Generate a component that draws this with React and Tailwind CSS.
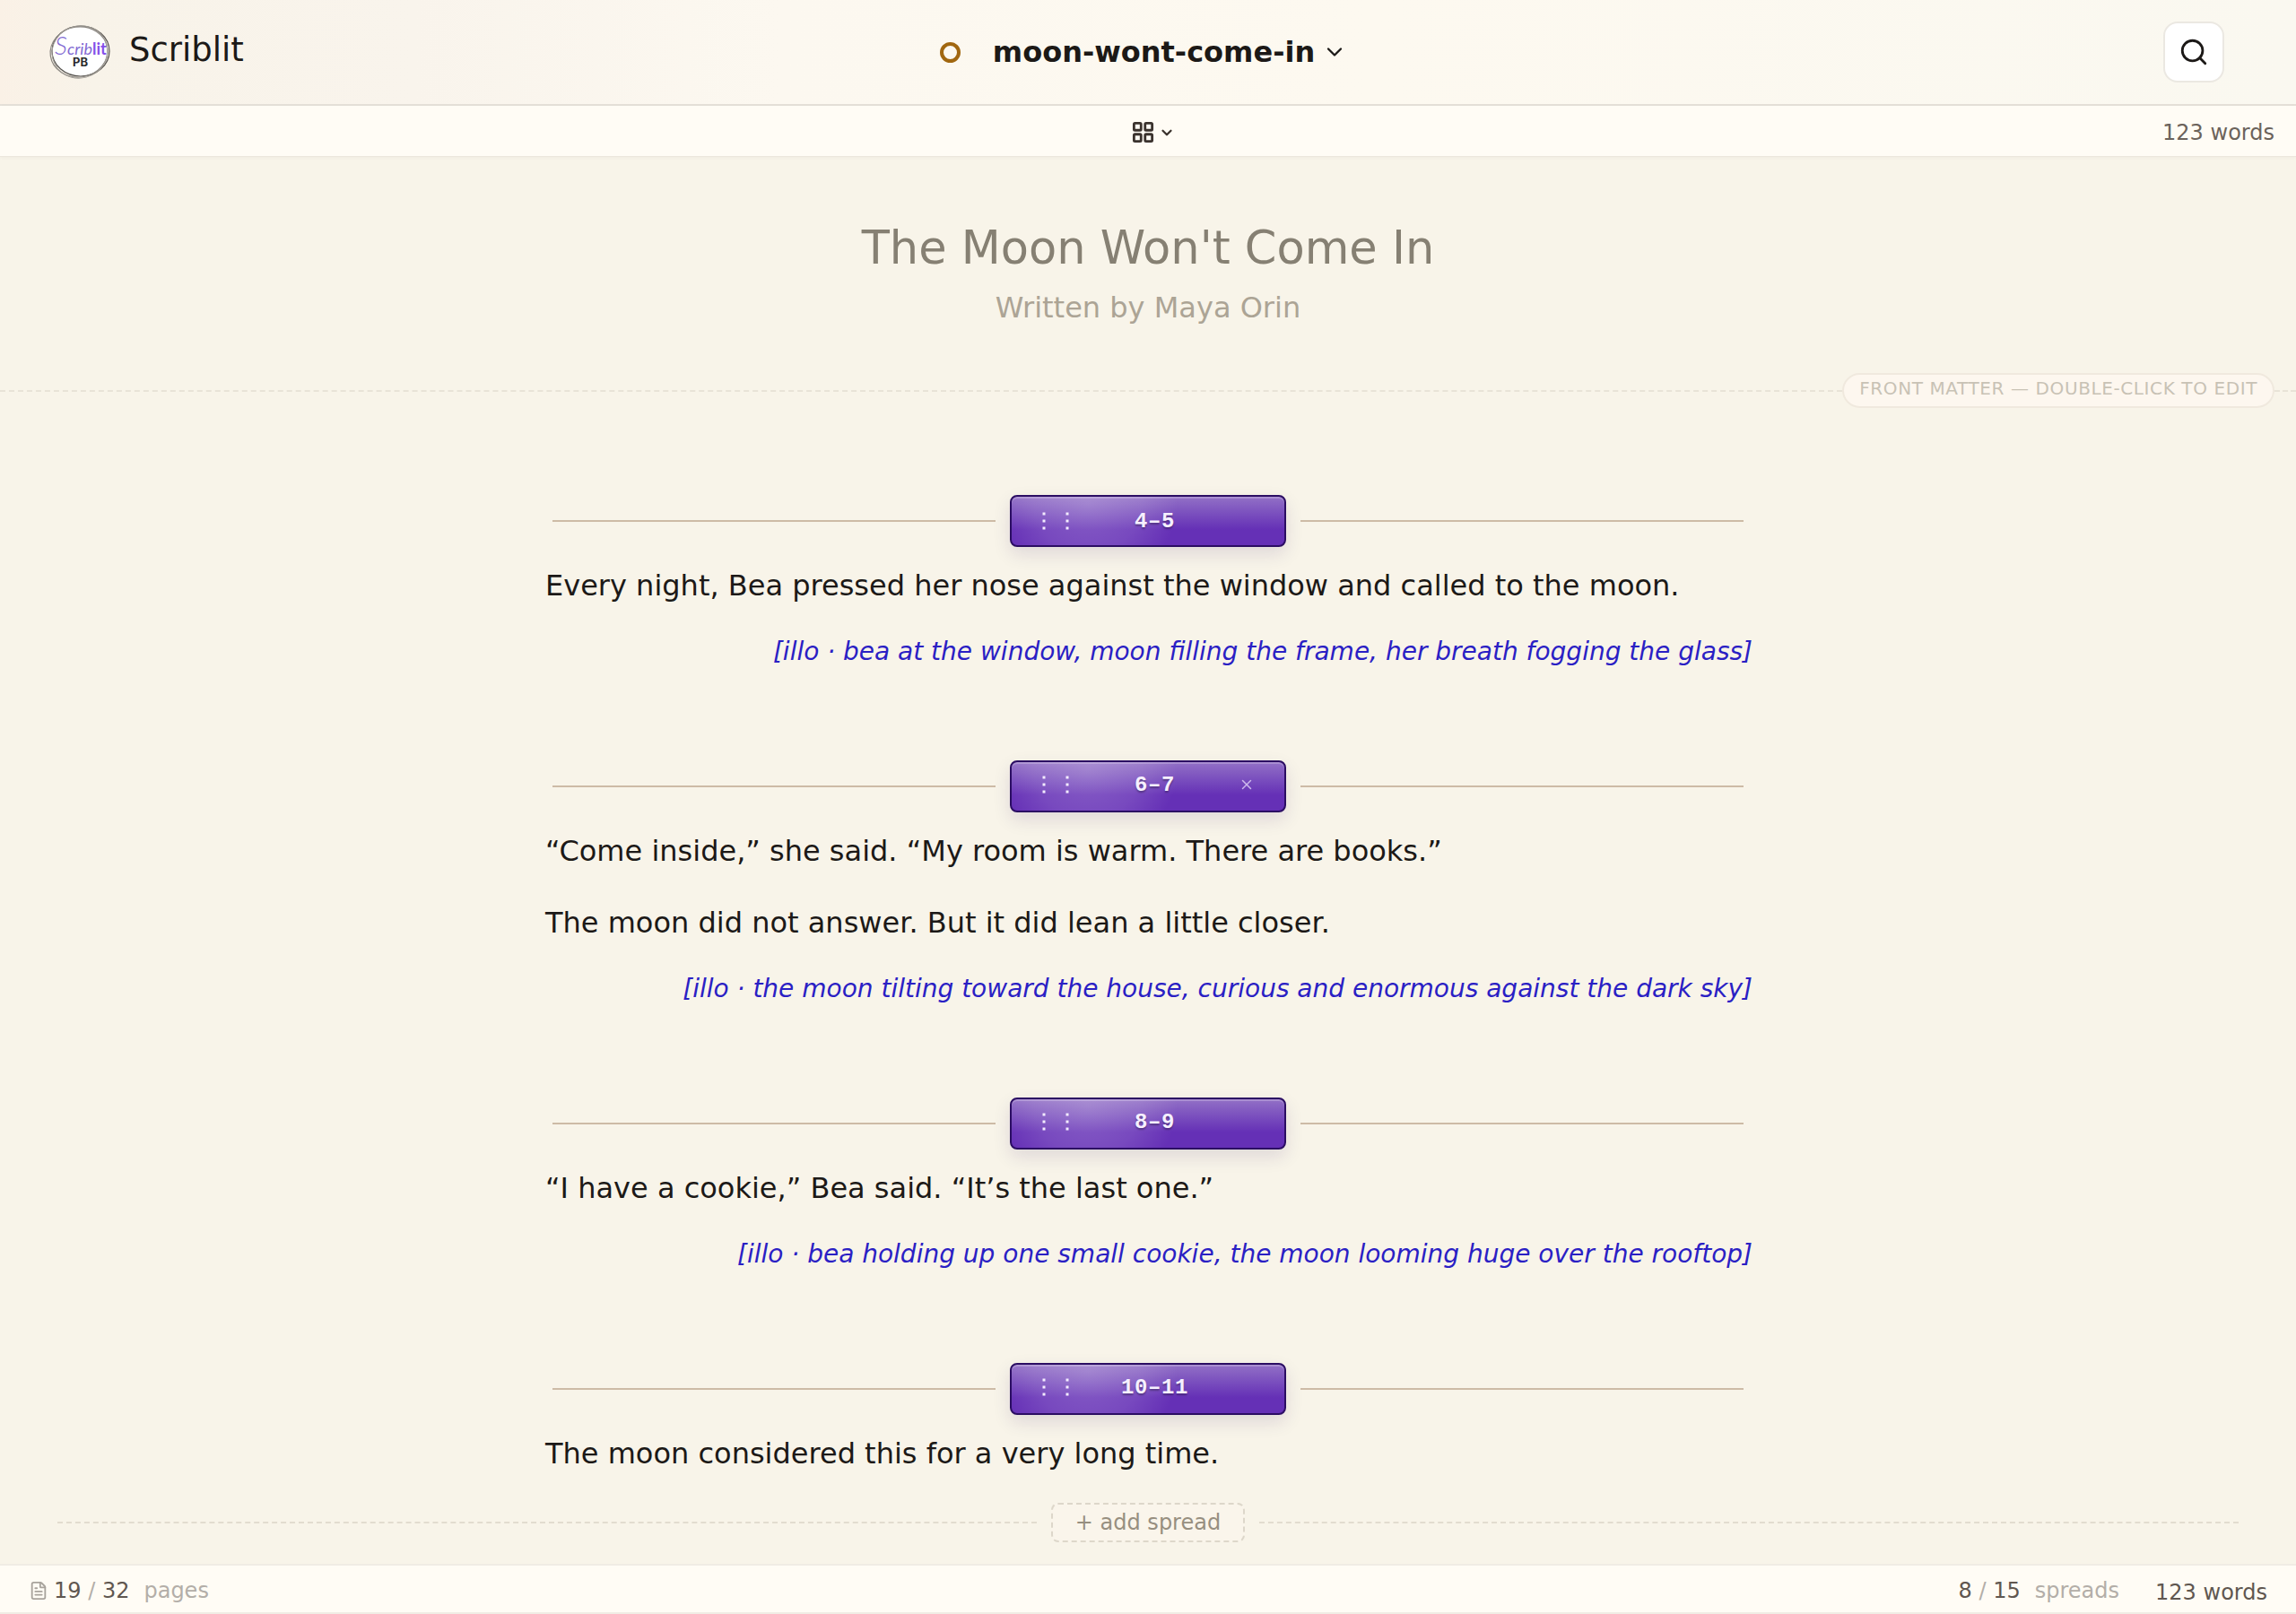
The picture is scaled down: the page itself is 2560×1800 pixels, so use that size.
import React from "react";
import { ChevronDown, FileText, LayoutGrid, Search, X } from "lucide-react";

const SPREADS = [
  {
    pages: "4–5",
    removable: false,
    text: ["Every night, Bea pressed her nose against the window and called to the moon."],
    illo: "[illo · bea at the window, moon filling the frame, her breath fogging the glass]",
  },
  {
    pages: "6–7",
    removable: true,
    active: true,
    text: [
      "“Come inside,” she said. “My room is warm. There are books.”",
      "The moon did not answer. But it did lean a little closer.",
    ],
    illo: "[illo · the moon tilting toward the house, curious and enormous against the dark sky]",
  },
  {
    pages: "8–9",
    removable: true,
    text: ["“I have a cookie,” Bea said. “It’s the last one.”"],
    illo: "[illo · bea holding up one small cookie, the moon looming huge over the rooftop]",
  },
  {
    pages: "10–11",
    removable: true,
    text: ["The moon considered this for a very long time."],
  },
];

function Logo() {
  return (
    <svg width="70" height="64" viewBox="0 0 70 64" role="img" aria-label="Scriblit PB">
      <ellipse cx="35" cy="31" rx="32" ry="28" fill="#fff" />
      <ellipse cx="36" cy="31" rx="32" ry="28" fill="none" stroke="#55524e" strokeWidth="1.2" />
      <ellipse cx="34" cy="32" rx="32" ry="28" fill="none" stroke="#8b8781" strokeWidth="1.2" transform="rotate(-8 34 32)" />
      <ellipse cx="35" cy="32" rx="31" ry="29" fill="none" stroke="#a19d97" strokeWidth="1" transform="rotate(-14 35 32)" />
      <text x="7" y="35" fontFamily="Lato, sans-serif">
        <tspan fontStyle="italic" fontSize="28" fontWeight="300" fill="#8269d3">S</tspan>
        <tspan fontStyle="italic" fontSize="18" fill="#8269d3">crib</tspan>
        <tspan fontWeight="700" fontSize="18" fill="#8450ea">lit</tspan>
      </text>
      <text x="27" y="48" fontFamily="Inter, sans-serif" fontWeight="700" fontSize="13" fill="#2b2b2e">
        PB
      </text>
    </svg>
  );
}

function DragHandle() {
  return (
    <svg width="30" height="20" viewBox="0 0 30 20" fill="#f3ecff" aria-hidden="true">
      {[2, 28].map((x) =>
        [2, 10, 18].map((y) => <rect key={`${x}-${y}`} x={x - 1.5} y={y - 1.5} width="3" height="3" />)
      )}
    </svg>
  );
}

function SpreadMarker({ pages, removable, active }) {
  return (
    <div className="mx-2 flex items-center gap-4">
      <div className="h-[2px] flex-1 bg-[#cdbba6]" />
      <div
        className={`flex h-[58px] w-[308px] items-center rounded-lg border-2 border-[#2b0d63] bg-[radial-gradient(ellipse_100px_90px_at_28%_15%,rgba(255,255,255,0.22),rgba(255,255,255,0.12)_60%,transparent),linear-gradient(to_bottom,#9270c6_0%,#7a4fbe_35%,#6530b6_68%,#6530b6_100%)] pr-[33px] pl-[34px] shadow-[inset_0_2px_0_rgba(255,255,255,0.22),0_8px_20px_rgba(43,13,99,0.12)] ${
          removable ? "pb-1" : ""
        }`}
      >
        <button type="button" aria-label={`Move spread ${pages}`} className="cursor-grab">
          <DragHandle />
        </button>
        <span className="flex-1 pt-px pl-0.5 text-center font-['Liberation_Mono',monospace] text-2xl font-bold tracking-wide text-[#f6f0ff] [text-shadow:0_2px_2px_rgba(0,0,0,0.3)]">
          {pages}
        </span>
        {active ? (
          <button type="button" aria-label={`Remove spread ${pages}`} className="text-[#cdb9ec]">
            <X size={18} strokeWidth={2} />
          </button>
        ) : (
          <span className="w-[18px]" />
        )}
      </div>
      <div className="h-[2px] flex-1 bg-[#cdbba6]" />
    </div>
  );
}

function Spread({ spread }) {
  return (
    <section>
      <SpreadMarker pages={spread.pages} removable={spread.removable} active={spread.active} />
      <div className="mt-[15px] flex flex-col gap-6">
        {spread.text.map((line) => (
          <p key={line} className="text-[32px] leading-[56px] text-[#1c1917]">
            {line}
          </p>
        ))}
        {spread.illo && (
          <p className="-mr-0.5 text-right text-[28px] leading-[44px] text-[#2a20c4] italic">{spread.illo}</p>
        )}
      </div>
    </section>
  );
}

function Count({ value, total, unit }) {
  return (
    <span className="text-[#b3aea8]">
      <span className="text-[#5f5750]">{value}</span> / <span className="text-[#5f5750]">{total}</span>
      <span className="ml-4">{unit}</span>
    </span>
  );
}

export default function App() {
  return (
    <div className="flex min-h-screen flex-col bg-[#f8f4e9] font-['DejaVu_Sans',sans-serif] text-[#1c1917]">
      <header className="grid h-[118px] grid-cols-[1fr_auto_1fr] items-center border-b-2 border-[#e5e0d8] bg-[linear-gradient(to_right,#faf1e6_0%,#f8f3e9_4%,#f9f4ec_18%,#fcf8f0_34%,#fdf9f0_60%,#faf8f0_100%)] px-[54px]">
        <div className="flex items-center gap-5">
          <Logo />
          <span className="pb-1 text-[37px]">Scriblit</span>
        </div>
        <div className="flex items-center gap-9">
          <span className="size-[23px] rounded-full border-4 border-[#a16710]" />
          <button type="button" className="flex items-center gap-2 pr-2.5 text-[32px] font-bold">
            moon-wont-come-in
            <ChevronDown size={28} strokeWidth={2} />
          </button>
        </div>
        <button
          type="button"
          aria-label="Search"
          className="mr-[26px] flex size-[68px] items-center justify-center justify-self-end rounded-2xl border-2 border-[#ebe8e2] bg-white"
        >
          <Search size={34} strokeWidth={2} />
        </button>
      </header>

      <div className="grid h-[57px] grid-cols-[1fr_auto_1fr] items-center border-b border-[#ece7dd] bg-[#fffcf5] px-6 pt-[3px] shadow-[0_1px_4px_rgba(0,0,0,0.04)]">
        <span />
        <button type="button" aria-label="View" className="flex items-center gap-1 pl-2.5 text-[#3a322d]">
          <LayoutGrid size={27} strokeWidth={2.5} />
          <ChevronDown size={18} strokeWidth={3} />
        </button>
        <span className="justify-self-end text-2xl text-[#6b635b]">123 words</span>
      </div>

      <main className="flex flex-1 flex-col">
        <div className="flex flex-col items-center pt-[70px] pb-[49px]">
          <h1 className="text-[51px] leading-[64px] text-[#868073]">The Moon Won't Come In</h1>
          <p className="mt-2.5 text-[32px] leading-[48px] text-[#aca495]">Written by Maya Orin</p>
        </div>

        <div className="flex items-center">
          <div className="flex-1 border-t-2 border-dashed border-[#e8e3d7]" />
          <button
            type="button"
            className="rounded-full border-2 border-[#f0e9de] bg-[#fdf7ef] px-[17px] pb-1 text-xl leading-[31px] tracking-[0.03em] text-[#c8c2b5] uppercase"
          >
            Front matter — double-click to edit
          </button>
          <div className="w-6 border-t-2 border-dashed border-[#e8e3d7]" />
        </div>

        <div className="mx-auto flex w-full max-w-[1344px] flex-col gap-[99px] pt-[97px]">
          {SPREADS.map((spread) => (
            <Spread key={spread.pages} spread={spread} />
          ))}
        </div>

        <div className="mt-auto flex items-center gap-4 px-16 pt-4 pb-6">
          <div className="flex-1 border-t-2 border-dashed border-[#e2dccf]" />
          <button
            type="button"
            className="h-11 w-[216px] rounded-lg border-2 border-dashed border-[#ddd7ca] bg-[#faf5eb] text-2xl leading-10 text-[#978f80]"
          >
            + add spread
          </button>
          <div className="flex-1 border-t-2 border-dashed border-[#e2dccf]" />
        </div>
      </main>

      <footer className="flex h-14 items-center justify-between border-y-2 border-[#f0ece4] bg-[#fffcf5] px-8 pt-1 text-2xl">
        <div className="flex items-center gap-1.5">
          <FileText size={22} strokeWidth={2} className="text-[#a8a39c]" />
          <Count value={19} total={32} unit="pages" />
        </div>
        <div className="flex items-center gap-10">
          <Count value={8} total={15} unit="spreads" />
          <span className="pt-1 text-[#5f5750]">123 words</span>
        </div>
      </footer>
    </div>
  );
}
